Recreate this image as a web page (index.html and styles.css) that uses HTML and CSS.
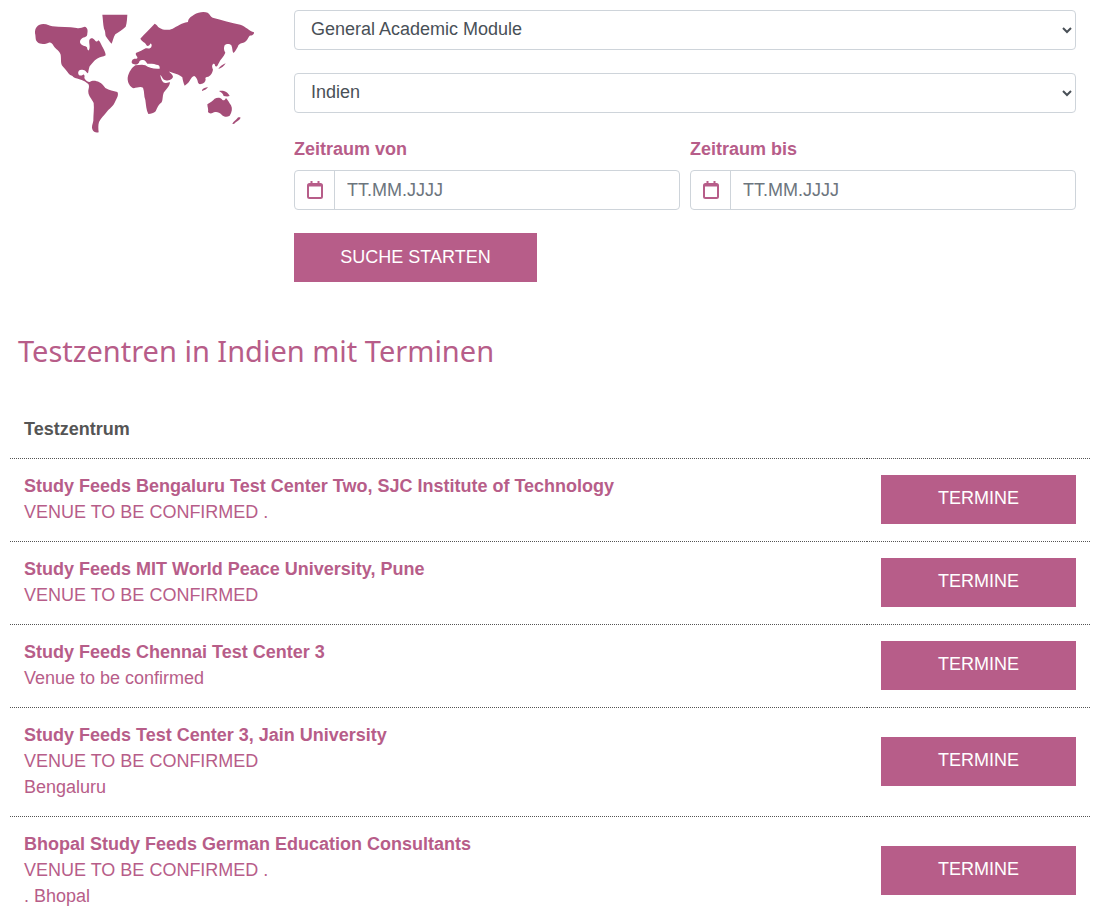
FILE: index.html
```html
<!DOCTYPE html>
<html lang="de">
<head>
  <meta charset="UTF-8" />
  <meta name="viewport" content="width=device-width, initial-scale=1" />
  <title>Testzentren</title>

  <link rel="stylesheet" href="styles.css">
</head>
<body>

  <!-- Search -->
  <section class="search">
    <div class="map">
      <svg viewBox="102 30 666 372" role="img" aria-label="Weltkarte">
        <!-- Americas and Greenland -->
        <g transform="translate(60 0)">
          <path d="M45 100 C44 84 53 72 70 72 C82 72 88 78 97 79 C120 82 148 80 170 84 C180 86 186 82 194 80 C203 82 204 92 202 100 C202 106 201 110 194 112 C184 114 178 122 181 130 C185 138 196 137 201 142 C202 148 204 154 207 150 C212 140 206 130 208 120 C212 112 219 114 224 120 C229 126 231 126 235 121 C240 123 243 134 248 142 C252 150 257 158 257 166 C250 171 240 170 231 176 C222 182 216 190 209 199 C206 205 206 214 204 220 C199 217 197 210 187 209 C177 208 173 214 175 222 C178 229 184 227 189 224 C193 223 195 228 193 234 C197 242 203 246 209 246 C216 241 228 241 238 247 C246 250 249 256 256 264 C268 272 280 272 292 276 C297 284 291 294 286 304 C280 320 268 326 260 336 C252 346 243 354 237 366 C234 376 235 386 236 397 C230 399 220 398 217 388 C214 380 218 372 220 362 C220 344 223 326 221 309 C216 297 205 288 205 276 C204 268 210 260 205 252 C198 247 192 242 185 240 C176 236 166 236 160 231 C157 225 152 228 147 222 C140 212 134 206 128 199 C121 190 124 178 122 164 C118 152 108 148 101 138 C97 131 93 126 86 128 C76 133 60 134 52 126 C45 120 48 110 45 100 Z" />
          <path d="M247 44 H322 C321 56 321 68 317 80 C307 90 295 96 286 103 C280 112 279 122 275 131 C269 126 263 117 257 108 C255 100 257 94 252 86 C249 72 249 58 247 44 Z" />
        </g>
        <!-- Europe, Asia, Africa and Oceania -->
        <g transform="translate(360 0)">
          <path d="M61 116 C72 102 91 86 104 71 C110 72 112 80 119 84 C130 91 145 91 158 86 C172 79 182 70 204 66 C204 56 210 52 222 44 C235 35 254 34 263 38 C270 43 271 50 278 53 C304 60 335 68 361 74 C377 80 389 93 402 97 C403 104 396 107 389 107 C382 116 381 124 370 128 C362 130 356 131 353 141 C349 148 345 156 340 159 C336 153 338 143 334 136 C329 131 319 131 314 136 C311 142 311 151 316 158 C312 170 301 177 297 188 C293 194 293 201 286 199 C284 194 285 189 279 192 C275 197 276 202 279 209 C277 219 273 226 265 230 C258 230 254 233 257 238 C257 246 251 252 243 252 C238 254 233 249 233 243 C231 237 229 232 223 228 C215 229 213 237 208 244 C204 250 199 254 194 257 C190 249 188 239 187 232 C179 224 169 222 160 219 C154 216 149 217 146 214 C150 220 158 222 159 230 C158 238 146 242 136 241 C128 238 126 230 121 224 C122 236 127 246 133 248 C140 250 147 247 150 247 C149 259 138 269 131 278 C127 288 129 299 125 307 C116 314 112 322 107 334 C101 340 93 342 85 342 C79 331 78 315 76 300 C71 288 74 276 69 263 C61 259 51 263 41 265 C30 260 22 248 23 233 C26 217 36 202 46 196 C56 196 66 192 76 196 C86 204 100 207 119 206 C120 198 117 194 109 194 C100 190 91 192 82 191 C77 184 74 179 68 180 C62 179 58 182 57 188 C52 195 41 195 36 190 C33 183 38 176 45 176 C51 176 53 176 52 171 C48 165 45 160 49 158 C60 156 67 149 77 145 C84 145 93 148 95 137 C95 130 91 128 90 133 C87 139 81 139 79 135 C77 127 66 126 61 116 Z" />
          <path d="M295 207 C300 199 308 194 317 190 C313 198 305 204 295 207 Z" />
          <path d="M246 270 C250 264 256 263 264 261 C261 267 254 271 246 273 Z" />
          <path d="M297 273 C308 270 323 273 329 288 C323 290 317 289 311 288 C310 281 303 277 297 273 Z" />
          <path d="M262 313 C270 308 279 302 284 296 C291 292 300 292 305 297 C308 302 314 303 318 294 C324 300 328 309 333 316 C338 325 336 337 329 347 C321 352 312 351 305 344 C298 337 290 334 282 337 C275 342 267 341 264 336 C266 328 262 321 262 313 Z" />
          <path d="M337 371 C341 364 348 361 352 355 C354 351 358 352 362 353 C358 361 352 363 347 367 C344 371 341 373 337 371 Z" />
        </g>
      </svg>
    </div>

    <form class="search-form">
      <select class="field" aria-label="Prüfung">
        <option>General Academic Module</option>
      </select>
      <select class="field" aria-label="Land">
        <option>Indien</option>
      </select>

      <div class="dates">
        <div class="date">
          <label for="from">Zeitraum von</label>
          <div class="input-group">
            <span class="addon">
              <svg viewBox="0 0 16 18" aria-hidden="true">
                <rect x="1" y="3" width="14" height="14" rx="1.5" />
                <path d="M1 4.5H15M4.5 0V4M11.5 0V4" />
              </svg>
            </span>
            <input type="text" id="from" placeholder="TT.MM.JJJJ" />
          </div>
        </div>
        <div class="date">
          <label for="to">Zeitraum bis</label>
          <div class="input-group">
            <span class="addon">
              <svg viewBox="0 0 16 18" aria-hidden="true">
                <rect x="1" y="3" width="14" height="14" rx="1.5" />
                <path d="M1 4.5H15M4.5 0V4M11.5 0V4" />
              </svg>
            </span>
            <input type="text" id="to" placeholder="TT.MM.JJJJ" />
          </div>
        </div>
      </div>

      <button type="submit" class="btn btn-search">SUCHE STARTEN</button>
    </form>
  </section>

  <!-- Results -->
  <section class="results">
    <h2>Testzentren in Indien mit Terminen</h2>

    <table>
      <thead>
        <tr>
          <th colspan="2">Testzentrum</th>
        </tr>
      </thead>
      <tbody>
        <tr>
          <td><strong>Study Feeds Bengaluru Test Center Two, SJC Institute of Technology</strong><br>VENUE TO BE CONFIRMED .</td>
          <td class="action"><button type="button" class="btn">TERMINE</button></td>
        </tr>
        <tr>
          <td><strong>Study Feeds MIT World Peace University, Pune</strong><br>VENUE TO BE CONFIRMED</td>
          <td class="action"><button type="button" class="btn">TERMINE</button></td>
        </tr>
        <tr>
          <td><strong>Study Feeds Chennai Test Center 3</strong><br>Venue to be confirmed</td>
          <td class="action"><button type="button" class="btn">TERMINE</button></td>
        </tr>
        <tr>
          <td><strong>Study Feeds Test Center 3, Jain University</strong><br>VENUE TO BE CONFIRMED<br>Bengaluru</td>
          <td class="action"><button type="button" class="btn">TERMINE</button></td>
        </tr>
        <tr>
          <td><strong>Bhopal Study Feeds German Education Consultants</strong><br>VENUE TO BE CONFIRMED .<br>. Bhopal</td>
          <td class="action"><button type="button" class="btn">TERMINE</button></td>
        </tr>
      </tbody>
    </table>
  </section>

</body>
</html>
```
FILE: styles.css
```css
/* Reset and base */
* {
  margin: 0;
  padding: 0;
  box-sizing: border-box;
}

body {
  padding: 10px 10px 0;
  background: #fff;
  color: #b75d89;
  font-family: Arial, "Liberation Sans", sans-serif;
  font-size: 18px;
  line-height: 26px;
}

input, select, button {
  font: inherit;
}

/* Search */
.search {
  display: grid;
  grid-template-columns: 260px 1fr;
  gap: 10px;
  padding: 0 14px;
}

.map {
  padding: 0 28px 0 10px;
}

.map svg {
  display: block;
  width: 100%;
  fill: #a54d78;
}

.search-form {
  display: flex;
  flex-direction: column;
  gap: 23px;
}

.field {
  width: 100%;
  height: 40px;
  padding: 0 0 2px 12px;
  border: 1px solid #ced4da;
  border-radius: 4px;
  background: #fff;
  color: #495057;
}

.dates {
  display: flex;
  gap: 10px;
}

.date {
  flex: 1;
}

.date label {
  display: block;
  margin-bottom: 8px;
  font-weight: bold;
}

.input-group {
  display: flex;
  height: 40px;
  border: 1px solid #ced4da;
  border-radius: 4px;
}

.addon {
  display: flex;
  align-items: center;
  justify-content: center;
  width: 40px;
  border-right: 1px solid #ced4da;
}

.addon svg {
  width: 16px;
  height: 18px;
  fill: none;
  stroke: #b75d89;
  stroke-width: 2;
}

.input-group input {
  flex: 1;
  min-width: 0;
  padding: 0 12px;
  border: 0;
  border-radius: 4px;
  background: transparent;
  color: #495057;
}

.input-group input::placeholder {
  color: #6c757d;
}

/* Buttons */
.btn {
  width: 195px;
  height: 49px;
  padding-bottom: 2px;
  border: 0;
  background: #b75d89;
  color: #fff;
  cursor: pointer;
}

.btn-search {
  width: 243px;
}

/* Results */
.results h2 {
  margin: 48px 8px 44px;
  font-family: "Noto Sans", "Open Sans", sans-serif;
  font-size: 29px;
  font-weight: 400;
  line-height: 42px;
}

table {
  width: 100%;
  border-collapse: collapse;
}

tr {
  border-bottom: 1px dotted #555;
}

th, td {
  padding: 14px 14px 16px;
  text-align: left;
}

th {
  padding-top: 0;
  color: #555;
}

.action {
  width: 223px;
  line-height: 0;
}
```
